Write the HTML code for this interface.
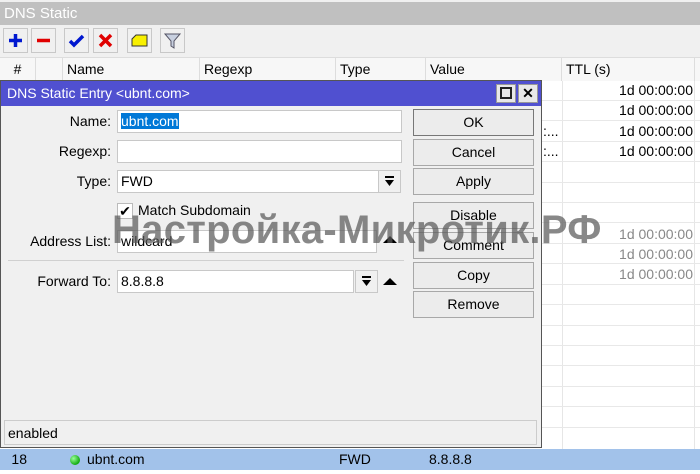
<!DOCTYPE html>
<html><head><meta charset="utf-8"><style>
*{box-sizing:border-box;margin:0;padding:0}
body{width:700px;height:474px;overflow:hidden;background:#fff;font-family:"Liberation Sans",sans-serif;font-size:14px;color:#000;position:relative}
.a{position:absolute}
.tb{background:#f0f0f0;border:1px solid #c8c8c8;width:25px;height:25px;top:28px}
.hc{top:58px;height:23px;border-right:1px solid #ddd;background:#f7f7f7;padding:3px 4px}
.gl{left:562px;width:1px;background:#e6e6e6}
.hl{height:1px;background:#e8e8e8;left:541px;width:159px}
.ttl{left:563px;width:130px;text-align:right;}
.lbl{right:589px;text-align:right}
.in{background:#fff;border:1px solid #c8c8c8;height:23px;padding:2px 3px}
.btn{left:413px;width:121px;height:27px;border:1px solid #a8a8a8;background:#ececec;text-align:center;line-height:25px}
.dd{width:23px;height:23px;border:1px solid #c8c8c8;background:#f0f0f0}
.tri{width:0;height:0;border-left:7px solid transparent;border-right:7px solid transparent;border-bottom:7px solid #000}
</style></head><body>
<div class="a" style="left:0;top:0;width:700px;height:2px;background:#f0f0f0"></div>
<div class="a" style="left:0;top:2px;width:700px;height:23px;background:#c0c0c0;color:#fff;padding:3px 4px;font-size:15px">DNS Static</div>
<div class="a" style="left:0;top:25px;width:700px;height:33px;background:#f0f0f0"></div>
<div class="a tb" style="left:3px"><svg width="23" height="23"><path d="M11.5 5v13M5 11.5h13" stroke="#0018d0" stroke-width="3.5"/></svg></div>
<div class="a tb" style="left:31px"><svg width="23" height="23"><path d="M5 11.5h13" stroke="#e00000" stroke-width="3.5"/></svg></div>
<div class="a tb" style="left:64px"><svg width="23" height="23"><path d="M5 12l4 4 9-9" stroke="#0018d0" stroke-width="3.5" fill="none"/></svg></div>
<div class="a tb" style="left:93px"><svg width="23" height="23"><path d="M6 6l11 11M17 6L6 17" stroke="#e00000" stroke-width="3.5"/></svg></div>
<div class="a tb" style="left:127px"><svg width="23" height="23"><path d="M8 6h11v11H4V10z" fill="#f8f000" stroke="#333"/></svg></div>
<div class="a tb" style="left:160px"><svg width="23" height="23"><path d="M4 5h15l-6 7v7l-3-2v-5z" fill="#c8d0e0" stroke="#556"/></svg></div>
<div class="a" style="left:0;top:57px;width:700px;height:1px;background:#ddd"></div>
<div class="a hc" style="left:0;width:36px;text-align:center">#</div>
<div class="a hc" style="left:36px;width:27px"></div>
<div class="a hc" style="left:63px;width:137px">Name</div>
<div class="a hc" style="left:200px;width:136px">Regexp</div>
<div class="a hc" style="left:336px;width:90px">Type</div>
<div class="a hc" style="left:426px;width:136px">Value</div>
<div class="a hc" style="left:562px;width:133px">TTL (s)</div>
<div class="a hc" style="left:695px;width:5px"></div>
<div class="a gl" style="top:81px;height:368px"></div>
<div class="a gl" style="left:694px;top:81px;height:368px"></div>
<div class="a hl" style="top:100px"></div><div class="a hl" style="top:120px"></div><div class="a hl" style="top:141px"></div><div class="a hl" style="top:161px"></div><div class="a hl" style="top:182px"></div><div class="a hl" style="top:202px"></div><div class="a hl" style="top:222px"></div><div class="a hl" style="top:243px"></div><div class="a hl" style="top:263px"></div><div class="a hl" style="top:284px"></div><div class="a hl" style="top:304px"></div><div class="a hl" style="top:325px"></div><div class="a hl" style="top:345px"></div><div class="a hl" style="top:365px"></div><div class="a hl" style="top:386px"></div><div class="a hl" style="top:406px"></div><div class="a hl" style="top:427px"></div>
<div class="a ttl" style="top:82px">1d 00:00:00</div>
<div class="a ttl" style="top:102px">1d 00:00:00</div>
<div class="a ttl" style="top:123px">1d 00:00:00</div>
<div class="a ttl" style="top:143px">1d 00:00:00</div>
<div class="a" style="left:543px;top:123px">:...</div>
<div class="a" style="left:543px;top:143px">:...</div>
<div class="a ttl" style="top:226px;color:#888">1d 00:00:00</div>
<div class="a ttl" style="top:246px;color:#888">1d 00:00:00</div>
<div class="a ttl" style="top:266px;color:#888">1d 00:00:00</div>
<div class="a" style="left:0;top:449px;width:700px;height:21px;background:#a2c2ea"></div>
<div class="a" style="left:0;top:451px;width:27px;text-align:right">18</div>
<div class="a" style="left:70px;top:455px;width:10px;height:10px;border-radius:50%;background:radial-gradient(circle at 35% 35%,#9f9,#1a1 70%)"></div>
<div class="a" style="left:87px;top:451px">ubnt.com</div>
<div class="a" style="left:339px;top:451px">FWD</div>
<div class="a" style="left:429px;top:451px">8.8.8.8</div>
<div class="a" style="left:0;top:80px;width:542px;height:368px;background:#f0f0f0;border:1px solid #555"></div>
<div class="a" style="left:1px;top:81px;width:540px;height:25px;background:#5050d0;color:#fff;padding:4px 6px;font-size:14px">DNS Static Entry &lt;ubnt.com&gt;</div>
<div class="a" style="left:496px;top:84px;width:20px;height:19px;background:#e8e8e8;border:1px solid #999"><div style="margin:2px 3px;width:12px;height:12px;border:2px solid #222"></div></div>
<div class="a" style="left:518px;top:84px;width:20px;height:19px;background:#e8e8e8;border:1px solid #999;text-align:center;font-weight:bold;line-height:17px">✕</div>
<div class="a lbl" style="top:113px">Name:</div>
<div class="a in" style="left:117px;top:110px;width:285px"><span style="background:#0078d7;color:#fff">ubnt.com</span></div>
<div class="a lbl" style="top:143px">Regexp:</div>
<div class="a in" style="left:117px;top:140px;width:285px"></div>
<div class="a lbl" style="top:173px">Type:</div>
<div class="a in" style="left:117px;top:170px;width:262px">FWD</div>
<div class="a dd" style="left:378px;top:170px"><svg width="21" height="21"><path d="M6 6h9" stroke="#000" stroke-width="2"/><path d="M6 9h9l-4.5 6z" fill="#000"/></svg></div>
<div class="a" style="left:117px;top:203px;width:16px;height:16px;background:#fff;border:1px solid #bbb;font-size:14px;line-height:14px;text-align:center">✔</div>
<div class="a" style="left:138px;top:202px">Match Subdomain</div>
<div class="a lbl" style="top:233px">Address List:</div>
<div class="a in" style="left:117px;top:230px;width:260px">wildcard</div>
<div class="a tri" style="left:383px;top:236px"></div>
<div class="a" style="left:8px;top:260px;width:396px;height:1px;background:#d0d0d0"></div>
<div class="a lbl" style="top:273px">Forward To:</div>
<div class="a in" style="left:117px;top:270px;width:237px">8.8.8.8</div>
<div class="a dd" style="left:355px;top:270px"><svg width="21" height="21"><path d="M6 6h9" stroke="#000" stroke-width="2"/><path d="M6 9h9l-4.5 6z" fill="#000"/></svg></div>
<div class="a tri" style="left:383px;top:278px"></div>
<div class="a btn" style="top:109px;border-color:#777">OK</div>
<div class="a btn" style="top:139px">Cancel</div>
<div class="a btn" style="top:168px">Apply</div>
<div class="a btn" style="top:202px">Disable</div>
<div class="a btn" style="top:232px">Comment</div>
<div class="a btn" style="top:262px">Copy</div>
<div class="a btn" style="top:291px">Remove</div>
<div class="a" style="left:4px;top:420px;width:533px;height:25px;border:1px solid #ccc;padding:4px 3px">enabled</div>
<div class="a" style="left:112px;top:208px;font-size:40px;font-weight:bold;color:rgba(90,90,90,0.72);white-space:nowrap;letter-spacing:0.3px">Настройка-Микротик.РФ</div>
</body></html>
